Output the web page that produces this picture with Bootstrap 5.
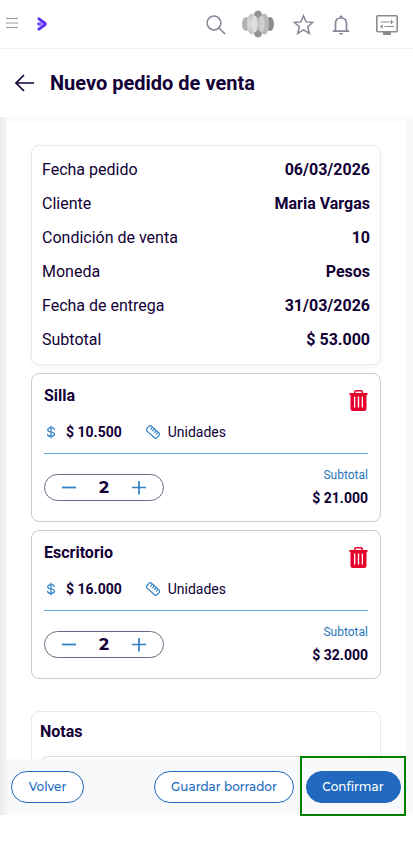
<!DOCTYPE html>
<html lang="es">
<head>
<meta charset="utf-8">
<meta name="viewport" content="width=device-width, initial-scale=1">
<title>Nuevo pedido de venta</title>
<link href="https://cdn.jsdelivr.net/npm/bootstrap@5.3.0/dist/css/bootstrap.min.css" rel="stylesheet">
<style>
:root{--ink:#120036;--blue:#2069bf}
html,body{height:848px;overflow:hidden}
body{font-family:Roboto,"Liberation Sans",sans-serif;color:var(--ink);background:#fff;font-size:16px}
svg{display:block;flex:none}
.topbar{height:49px;border-bottom:1px solid #f0f0f2;padding:0 15px 0 6px}
.menu-icon{margin-top:17px}
.logo-icon{margin-left:19px}
.search-icon{margin-top:1px}
.globe-icon{margin-left:16px}
.star-icon{margin-left:19px}
.bell-icon{margin:1px 0 0 18px}
.screen-icon{margin:1px 0 0 26px}
.titlebar{height:68px;padding:0 15px}
.titlebar h1{font-size:20px;font-weight:700;line-height:24px;margin:0 0 0 15px}
.shell{background:linear-gradient(90deg,#e9eaec,#f5f6f8) 0 0/7px 100% no-repeat #f7f9fb}
.stage{height:642px;padding:4px 8px 0 7px}
.sheet{height:638px;padding:24px 24px 0;overflow:hidden}
.panel{border:1px solid #e9e9ec;border-radius:8px}
.summary{height:220px;padding:7px 10px;box-shadow:0 2px 4px rgba(0,0,0,.05)}
.summary .line{height:34px}
.item{height:149px;border-color:#caccd4;padding:10px 12px 0;margin-top:8px}
.item-name{line-height:24px}
.item-info{font-size:14px;line-height:20px;height:20px;margin-top:14px}
.dollar-icon{margin:0 10px 0 2px}
.ruler-icon{margin:0 8px 0 24px}
.item-sep{height:1px;background:#62a6d3;margin-top:11px}
.bin{margin:6px 0 0;height:21px}
.stepper{width:120px;height:27px;border:1px solid #6b6882;border-radius:14px;padding:0 17px;margin-top:20px}
.qty{font:700 17px/25px Montserrat,Inter,sans-serif}
.sub-label{font-size:12px;line-height:16px;margin-top:13px;color:#2674bd}
.sub-value{font-size:14px;line-height:20px;margin-top:5px}
.notes{margin-top:32px;height:100px;padding:8px 8px 0}
.notes h2{font-size:16px;line-height:24px;margin:0 0 12px}
.note-box{height:60px;border:1px solid #dcdce4;border-radius:8px}
.actions{height:56px;padding:0 7px 0 11px}
.pill{height:32px;border-radius:16px;border:1px solid var(--blue);font:500 12px/18px Montserrat,Inter,sans-serif;padding:0 0 1px;color:var(--blue);background:#fff}
.pill.solid{background:var(--blue);color:#fff;width:95px}
.back{width:73px}.draft{width:140px;margin-right:6px}
.focus-frame{width:106px;height:60px;border:2px solid #008000;margin:-3px 0 -1px;padding-top:2px}
</style>
<script src="https://cdn.jsdelivr.net/npm/bootstrap@5.3.0/dist/js/bootstrap.bundle.min.js"></script>
</head>
<body>
<svg width="0" height="0" class="position-absolute">
<defs>
<symbol id="bin" viewBox="0 0 19 21"><path fill="#e4002b" fill-rule="evenodd" d="M5 3V2Q5 0 7 0h5q2 0 2 2v1h4.500v2H17.500v13.500q0 2.500-2.500 2.500H4q-2.500 0-2.500-2.500V5H.5V3ZM6.500 3h6V2.200Q12.500 1.500 11.800 1.500H7.200q-.7 0-.7.700ZM5 6.500v11h1.300v-11Zm3.800 0v11h1.400v-11Zm3.900 0v11H14v-11Z"/></symbol>
<symbol id="dollar" viewBox="0 0 10 14"><path fill="none" stroke="#2f81c7" stroke-width="1.200" stroke-linecap="round" d="M5 1v12M8.300 4.500Q8 2.700 5 2.700 1.800 2.700 1.800 4.700T5 7q3.500.3 3.500 2.300T5 11.400Q1.700 11.400 1.500 9.400"/></symbol>
<symbol id="ruler" viewBox="0 0 14 14"><g transform="rotate(42 7 7)" fill="none" stroke="#2f81c7" stroke-width="1.200"><rect x=".2" y="3.700" width="13.600" height="6.600" rx="1.800"/><path d="M3.500 4v2.800M6 4v2.800M8.500 4v2.800M11 4v2.800"/></g></symbol>
</defs>
</svg>

<header class="topbar d-flex align-items-center">
<svg class="menu-icon align-self-start" width="12" height="12"><path d="M0 1.500h12M0 6h12M0 10.500h12" stroke="#999" stroke-width="1.200"/></svg>
<svg class="logo-icon" width="11" height="14" viewBox="0 0 11 14"><path d="M2 1.900 7.800 6.200Q8.800 7 7.800 7.700L2 12.100" fill="none" stroke="#5b2ef5" stroke-width="3" stroke-linecap="round" stroke-linejoin="round"/><path d="M1.500 7h1.800" stroke="#6b45ff" stroke-width="2.800" stroke-linecap="round"/></svg>
<div class="ms-auto d-flex align-items-center">
<svg class="search-icon" width="20" height="20" viewBox="0 0 20 20" fill="none" stroke="#858799" stroke-width="1.500"><circle cx="8" cy="8" r="6.900"/><path d="m13 13 6 6" stroke-width="1.700"/></svg>
<svg class="globe-icon" width="32" height="28" viewBox="0 0 32 28"><ellipse cx="4" cy="14" rx="4" ry="7" fill="#b3b3b3"/><ellipse cx="28" cy="14" rx="4" ry="7" fill="#8c8c8c"/><path d="M16 .5q4 .5 4 4.500l-2 7v4l2 7q0 4-4 4.500-4-.5-4-4.500l2-7v-4l-2-7q0-4 4-4.500Z" fill="#929292"/><ellipse cx="9.500" cy="14" rx="4.500" ry="10.500" fill="#c8c8c8"/><ellipse cx="22.500" cy="14" rx="4.500" ry="10.500" fill="#b7b7b7"/><ellipse cx="7" cy="14" rx="1.800" ry="6.500" fill="#d6d6d6"/><ellipse cx="12.500" cy="14" rx="3.500" ry="8.500" fill="#dedede"/><ellipse cx="19.500" cy="14" rx="3.300" ry="8.500" fill="#cdcdcd"/><path d="M16 7v14" stroke="#bcbcbc"/></svg>
<svg class="star-icon" width="21" height="21" viewBox="0 0 21 21"><path d="m10.500 1.700 2.600 6.200 6.700.5-5.100 4.400 1.600 6.500-5.800-3.500-5.800 3.500 1.600-6.500L1.200 8.400l6.700-.5Z" fill="none" stroke="#858799" stroke-width="1.500"/></svg>
<svg class="bell-icon" width="18" height="20" viewBox="0 0 18 20"><path d="M3.500 16V8.500Q3.500 3 9 3t5.500 5.500V16M.8 16.200h16.400" fill="none" stroke="#858799" stroke-width="1.700"/><path d="M7.600 3V1.800q0-1.300 1.400-1.300t1.400 1.300V3M6.800 18h4.400q-.5 1.700-2.200 1.700T6.800 18Z" fill="#858799"/></svg>
<svg class="screen-icon" width="22" height="20" viewBox="0 0 22 20"><rect x=".8" y=".8" width="20.400" height="16" rx="1" fill="none" stroke="#8b8b8b" stroke-width="1.600"/><path d="M7 17h8v3H7z" fill="#8b8b8b"/><path d="M4.500 7h9M14 7h4M15.500 5v4M4 11.500h3M8.500 11.500H18M6 9.500v4" stroke="#8b8b8b" stroke-width="1.100" fill="none"/></svg>
</div>
</header>

<div class="titlebar d-flex align-items-center">
<svg width="20" height="18" viewBox="0 0 20 18"><path d="M9 1 1 9l8 8M1 9h18" fill="none" stroke="#120036" stroke-width="1.700"/></svg>
<h1>Nuevo pedido de venta</h1>
</div>

<div class="shell">
<main class="stage">
<div class="sheet bg-white">
<section class="panel summary">
<div class="line d-flex justify-content-between align-items-center"><span>Fecha pedido</span><b>06/03/2026</b></div>
<div class="line d-flex justify-content-between align-items-center"><span>Cliente</span><b>Maria Vargas</b></div>
<div class="line d-flex justify-content-between align-items-center"><span>Condición de venta</span><b>10</b></div>
<div class="line d-flex justify-content-between align-items-center"><span>Moneda</span><b>Pesos</b></div>
<div class="line d-flex justify-content-between align-items-center"><span>Fecha de entrega</span><b>31/03/2026</b></div>
<div class="line d-flex justify-content-between align-items-center"><span>Subtotal</span><b>$ 53.000</b></div>
</section>

<article class="panel item">
<div class="d-flex justify-content-between">
<div><div class="item-name fw-bold">Silla</div>
<div class="item-info d-flex align-items-center"><svg class="dollar-icon" width="10" height="14"><use href="#dollar"/></svg><b>$ 10.500</b><svg class="ruler-icon" width="14" height="14"><use href="#ruler"/></svg><span>Unidades</span></div></div>
<svg class="bin" width="19" height="21"><use href="#bin"/></svg>
</div>
<div class="item-sep"></div>
<div class="d-flex justify-content-between align-items-start">
<div class="stepper d-flex align-items-center justify-content-between"><svg width="14" height="14"><path d="M0 6.500h14" stroke="#2f81c7" stroke-width="1.800"/></svg><span class="qty">2</span><svg width="14" height="14"><path d="M0 6.500h14M7 0v13.500" stroke="#2f81c7" stroke-width="1.700"/></svg></div>
<div class="text-end"><div class="sub-label">Subtotal</div><div class="sub-value fw-bold">$ 21.000</div></div>
</div>
</article>

<article class="panel item">
<div class="d-flex justify-content-between">
<div><div class="item-name fw-bold">Escritorio</div>
<div class="item-info d-flex align-items-center"><svg class="dollar-icon" width="10" height="14"><use href="#dollar"/></svg><b>$ 16.000</b><svg class="ruler-icon" width="14" height="14"><use href="#ruler"/></svg><span>Unidades</span></div></div>
<svg class="bin" width="19" height="21"><use href="#bin"/></svg>
</div>
<div class="item-sep"></div>
<div class="d-flex justify-content-between align-items-start">
<div class="stepper d-flex align-items-center justify-content-between"><svg width="14" height="14"><path d="M0 6.500h14" stroke="#2f81c7" stroke-width="1.800"/></svg><span class="qty">2</span><svg width="14" height="14"><path d="M0 6.500h14M7 0v13.500" stroke="#2f81c7" stroke-width="1.700"/></svg></div>
<div class="text-end"><div class="sub-label">Subtotal</div><div class="sub-value fw-bold">$ 32.000</div></div>
</div>
</article>

<section class="panel notes">
<h2 class="fw-bold">Notas</h2>
<div class="note-box"></div>
</section>
</div>
</main>
<footer class="actions d-flex align-items-center">
<button class="btn pill back">Volver</button>
<button class="btn pill draft ms-auto">Guardar borrador</button>
<div class="focus-frame d-flex align-items-center justify-content-center"><button class="btn pill solid">Confirmar</button></div>
</footer>
</div>
</body>
</html>
